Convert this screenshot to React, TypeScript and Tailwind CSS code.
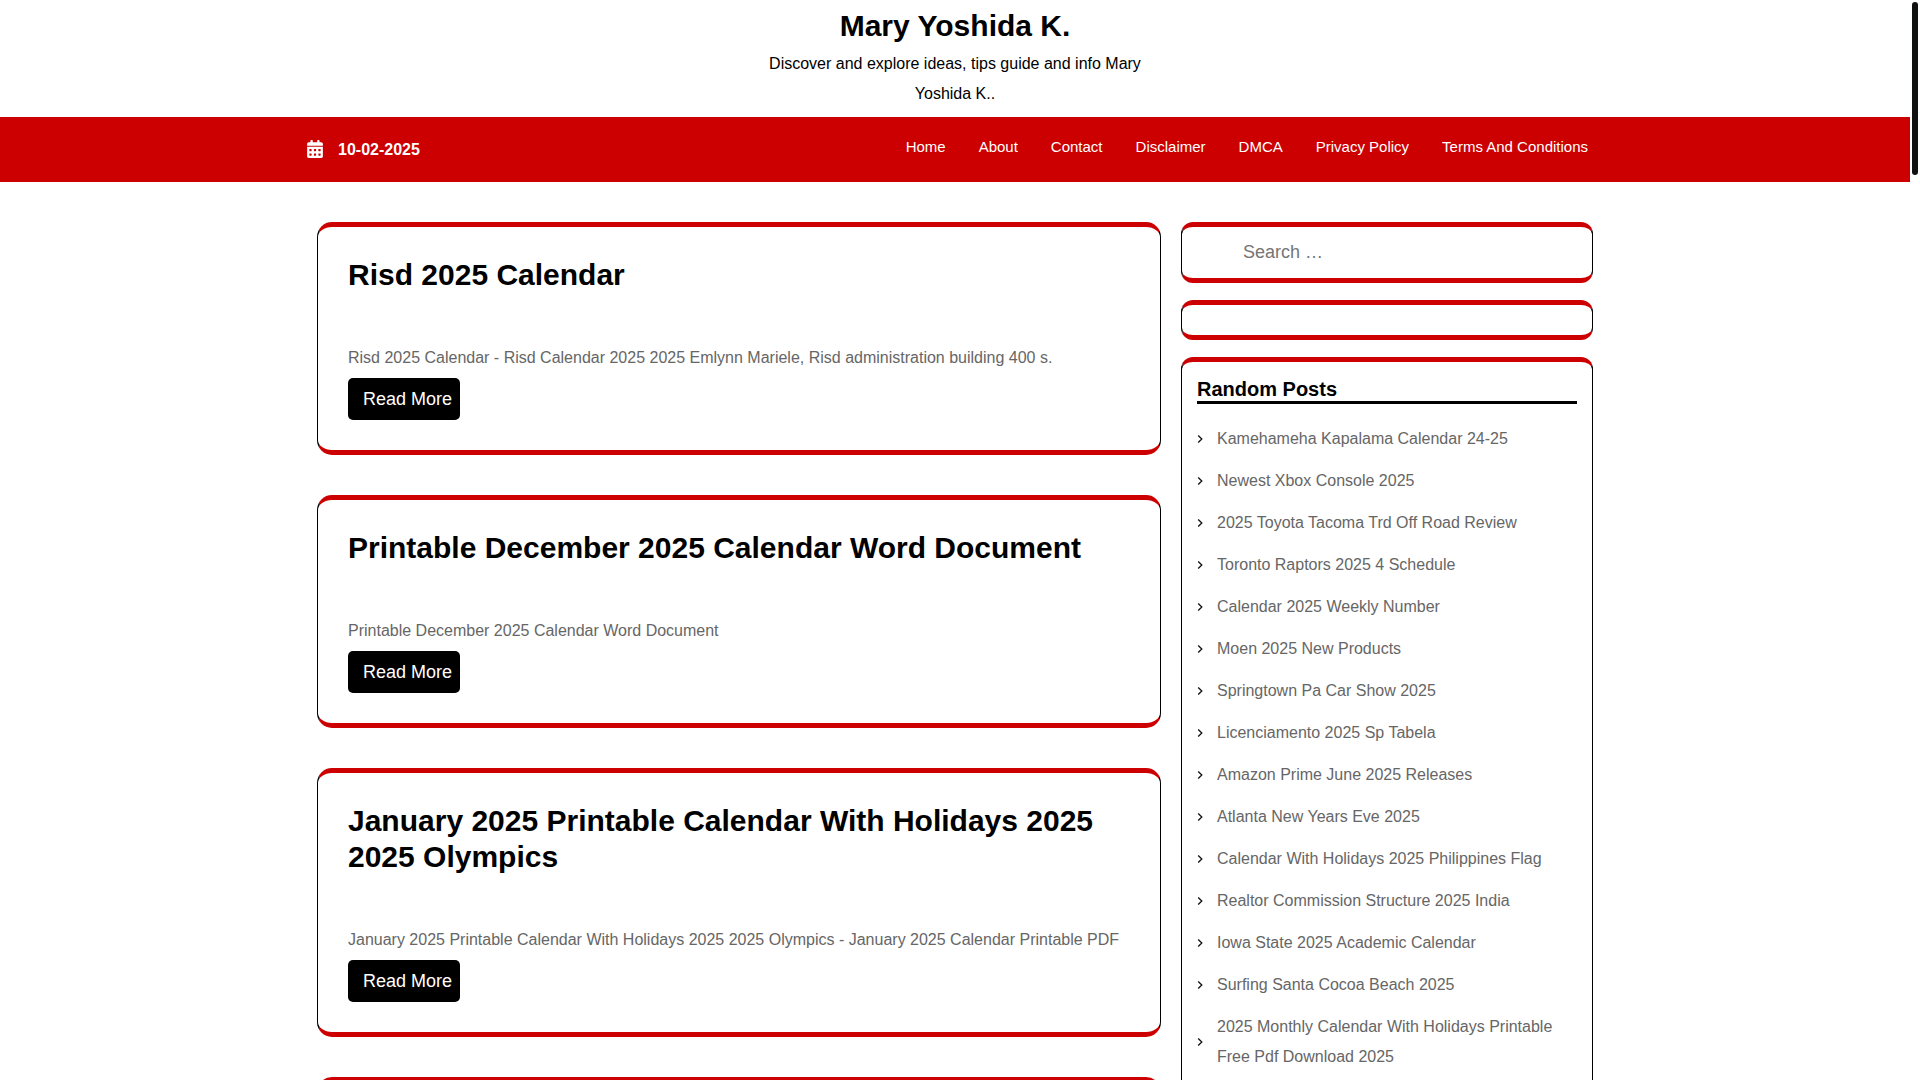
import { FaCalendarAlt } from 'react-icons/fa';

interface Post {
  title: string;
  excerpt: string;
}

const NAV_LINKS = ['Home', 'About', 'Contact', 'Disclaimer', 'DMCA', 'Privacy Policy', 'Terms And Conditions'];

const POSTS: Post[] = [
  {
    title: 'Risd 2025 Calendar',
    excerpt: 'Risd 2025 Calendar - Risd Calendar 2025 2025 Emlynn Mariele, Risd administration building 400 s.',
  },
  {
    title: 'Printable December 2025 Calendar Word Document',
    excerpt: 'Printable December 2025 Calendar Word Document',
  },
  {
    title: 'January 2025 Printable Calendar With Holidays 2025 2025 Olympics',
    excerpt: 'January 2025 Printable Calendar With Holidays 2025 2025 Olympics - January 2025 Calendar Printable PDF',
  },
];

const RANDOM_POSTS = [
  'Kamehameha Kapalama Calendar 24-25',
  'Newest Xbox Console 2025',
  '2025 Toyota Tacoma Trd Off Road Review',
  'Toronto Raptors 2025 4 Schedule',
  'Calendar 2025 Weekly Number',
  'Moen 2025 New Products',
  'Springtown Pa Car Show 2025',
  'Licenciamento 2025 Sp Tabela',
  'Amazon Prime June 2025 Releases',
  'Atlanta New Years Eve 2025',
  'Calendar With Holidays 2025 Philippines Flag',
  'Realtor Commission Structure 2025 India',
  'Iowa State 2025 Academic Calendar',
  'Surfing Santa Cocoa Beach 2025',
  '2025 Monthly Calendar With Holidays Printable Free Pdf Download 2025',
];

const FRAME = 'border-x border-y-[5px] border-x-black border-y-[#cc0000]';

function PostCard({ post }: { post: Post }) {
  return (
    <article className={`${FRAME} rounded-[15px] p-[30px]`}>
      <h2 className="text-[30px] leading-9 font-bold text-black">
        <a href="#">{post.title}</a>
      </h2>
      <p className="mt-[50px] text-base leading-[30px] text-[#666666]">{post.excerpt}</p>
      <a
        href="#"
        className="mt-[5px] inline-block rounded-[5px] bg-black pr-2 pl-[15px] align-top text-lg leading-[42px] text-white"
      >
        Read More
      </a>
    </article>
  );
}

function Header() {
  return (
    <header>
      <div className="mx-auto max-w-[380px] pt-2 pb-2 text-center text-black">
        <h1 className="text-[30px] leading-9 font-bold">
          <a href="#">Mary Yoshida K.</a>
        </h1>
        <p className="mt-[5px] text-base leading-[30px]">
          Discover and explore ideas, tips guide and info Mary Yoshida K..
        </p>
      </div>
      <div className="bg-[#cc0000] text-white">
        <div className="mx-auto flex h-[65px] max-w-[1296px] items-center justify-between pr-[15px]">
          <p className="flex items-center gap-[15px] text-base font-bold">
            <FaCalendarAlt className="mb-0.5 h-[18px] w-4" />
            10-02-2025
          </p>
          <nav className="pb-1.5">
            <ul className="flex gap-[33px] text-[15px] leading-[30px]">
              {NAV_LINKS.map((label) => (
                <li key={label}>
                  <a href="#">{label}</a>
                </li>
              ))}
            </ul>
          </nav>
        </div>
      </div>
    </header>
  );
}

function Chevron() {
  return (
    <svg viewBox="0 0 6 10" className="mr-[14px] h-2.5 w-1.5 shrink-0" fill="none" stroke="#111" strokeWidth="1.3" aria-hidden="true">
      <path d="M1.2 1.5 4.8 5 1.2 8.5" />
    </svg>
  );
}

function Sidebar() {
  return (
    <aside className="flex flex-col gap-[17px]">
      <form role="search" className={`${FRAME} rounded-xl`}>
        <input
          type="search"
          aria-label="Search for:"
          placeholder="Search …"
          className="block h-[51px] w-full pr-4 pl-[61px] text-lg outline-none placeholder:text-[#757575]"
        />
      </form>
      <div className={`${FRAME} rounded-xl p-[15px]`} />
      <section className={`${FRAME} rounded-xl p-[15px]`}>
        <h3 className="border-b-[3px] border-black text-xl leading-6 font-bold text-black">Random Posts</h3>
        <ul className="mt-5 flex flex-col gap-3">
          {RANDOM_POSTS.map((title) => (
            <li key={title} className="flex items-center text-base leading-[30px] text-[#666666]">
              <Chevron />
              <a href="#">{title}</a>
            </li>
          ))}
        </ul>
      </section>
    </aside>
  );
}

export default function App() {
  return (
    <div className="relative h-screen overflow-hidden bg-white pr-2.5 font-['Liberation_Sans',Arial,sans-serif]">
      <Header />
      <div className="mx-auto mt-10 grid max-w-[1276px] grid-cols-[1fr_412px] items-start gap-5">
        <main className="flex flex-col gap-10">
          {POSTS.map((post) => (
            <PostCard key={post.title} post={post} />
          ))}
          <article className={`${FRAME} rounded-[15px] p-[30px]`} />
        </main>
        <Sidebar />
      </div>
      {/* scrollbar thumb */}
      <div className="absolute top-0.5 right-0.5 h-[173px] w-1.5 rounded-full bg-[#0f1111]" />
    </div>
  );
}
